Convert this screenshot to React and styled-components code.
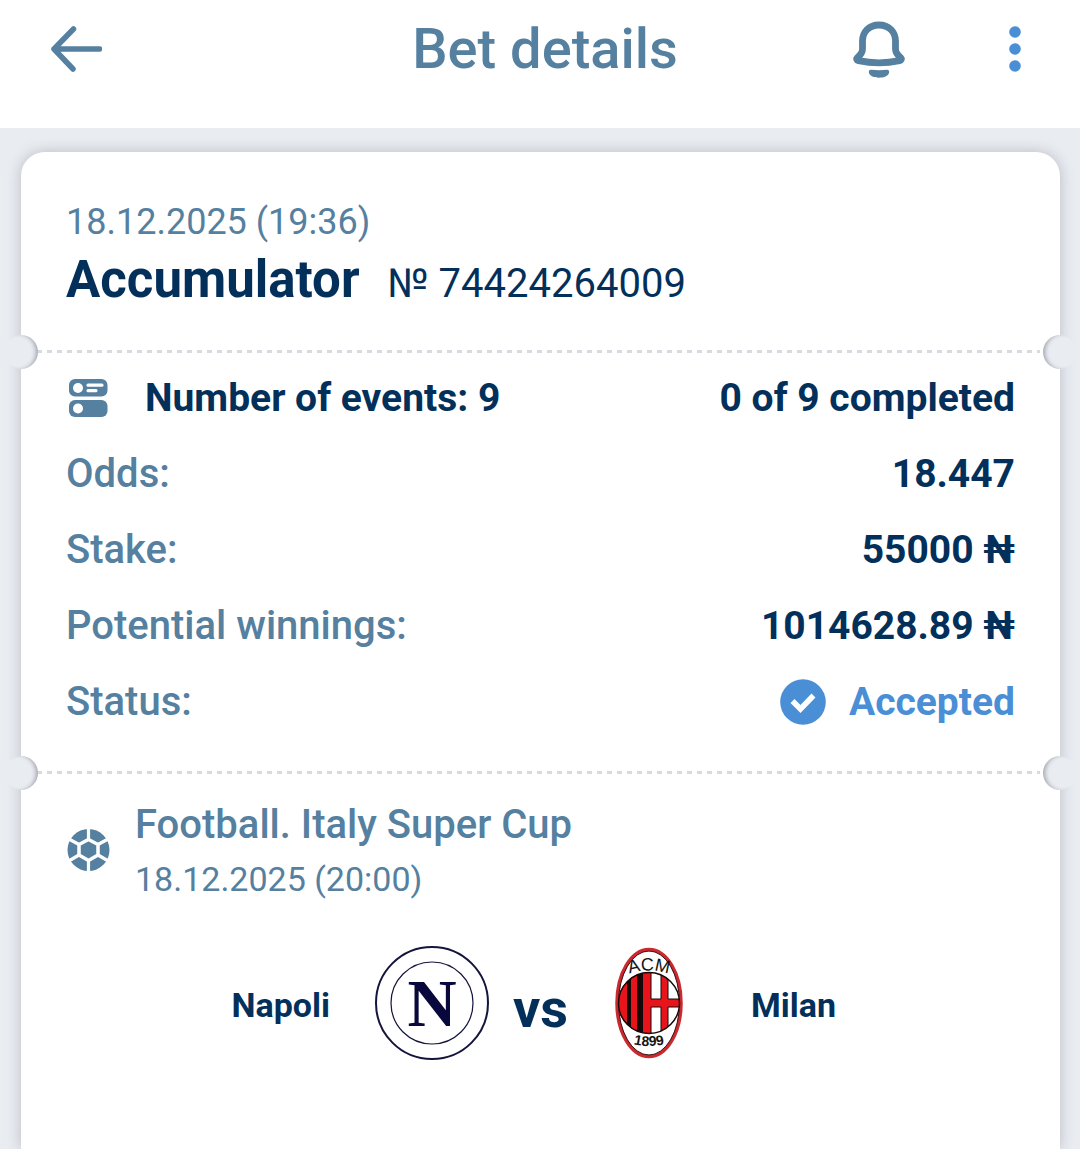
import React from "react";
import styled, { createGlobalStyle } from "styled-components";

const GlobalStyle = createGlobalStyle`
  * {
    box-sizing: border-box;
  }

  body {
    margin: 0;
    background-color: #e9edf2;
    color: #03305a;
    font-family: Roboto, "Noto Sans", sans-serif;
  }
`;

const Page = styled.div`
  display: flex;
  flex-direction: column;
  min-height: 100vh;
  overflow: hidden;
`;

const Header = styled.header`
  display: grid;
  grid-template-columns: 1fr auto 1fr;
  align-items: center;
  height: 128px;
  padding: 0 40px 30px 50px;
  background-color: #fff;
`;

const Title = styled.h1`
  margin: 0;
  font-size: 56px;
  font-weight: 500;
  line-height: 64px;
  color: #5580a0;
`;

const HeaderActions = styled.div`
  display: flex;
  align-items: center;
  justify-content: flex-end;
  gap: 84px;
`;

const IconButton = styled.button`
  display: flex;
  align-items: center;
  justify-content: center;
  justify-self: start;
  width: ${(props) => props.$width};
  height: 64px;
  padding: 0;
  border: none;
  background: none;
  color: ${(props) => props.$color || "#5580a0"};
  cursor: pointer;
`;

const Ticket = styled.main`
  flex: 1;
  margin: 24px 20px 0 21px;
  background-color: #fff;
  border-radius: 24px 24px 0 0;
  box-shadow: 0 0 14px rgba(60, 60, 75, 0.28);
`;

const Summary = styled.section`
  padding: 48px 45px 32px;
`;

const DateText = styled.p`
  margin: 0;
  font-size: ${(props) => props.$size || "36px"};
  line-height: 44px;
  color: #5580a0;
`;

const BetTitle = styled.h2`
  display: flex;
  align-items: baseline;
  gap: 28px;
  margin: 8px 0 0;
  font-size: 51px;
  font-weight: 700;
  line-height: 56px;
`;

const BetNumber = styled.span`
  font-size: 40px;
  font-weight: 400;
`;

/* Perforated line with a punched hole on each edge of the ticket */
const Perforation = styled.div`
  position: relative;
  height: 16px;

  &::before {
    content: "";
    position: absolute;
    top: 6px;
    left: 16px;
    right: 20px;
    height: 3px;
    background: repeating-linear-gradient(
      to right,
      #d9dae1 0 5px,
      transparent 5px 10px
    );
  }
`;

const Notch = styled.span`
  position: absolute;
  top: -9px;
  ${(props) => props.$side}: -17px;
  width: 34px;
  height: 34px;
  border-radius: 50%;
  background-color: #e9edf2;
  box-shadow: inset ${(props) => (props.$side === "left" ? "-4px" : "4px")} 0
    4px -2px rgba(60, 60, 75, 0.4);
`;

const Details = styled.dl`
  margin: 0;
  padding: 0 45px 25px;
`;

const DetailRow = styled.div`
  display: flex;
  align-items: center;
  justify-content: space-between;
  height: 76px;
`;

const DetailLabel = styled.dt`
  display: flex;
  align-items: center;
  gap: 37px;
  font-size: ${(props) => (props.$strong ? "39px" : "40px")};
  font-weight: ${(props) => (props.$strong ? 700 : 500)};
  line-height: 48px;
  color: ${(props) => (props.$strong ? "#03305a" : "#5580a0")};
`;

const DetailValue = styled.dd`
  display: flex;
  align-items: center;
  gap: 23px;
  margin: 0;
  font-size: 39px;
  font-weight: 700;
  line-height: 48px;
  color: ${(props) => (props.$accepted ? "#4a8fd6" : "#03305a")};
`;

const Event = styled.section`
  padding: 18px 45px 48px;
`;

const EventHeader = styled.div`
  display: flex;
  align-items: center;
  gap: 24px;
`;

const EventInfo = styled.div`
  display: flex;
  flex-direction: column;
  gap: 6px;
`;

const League = styled.h3`
  margin: 0;
  font-size: 40px;
  font-weight: 500;
  line-height: 52px;
  color: #5580a0;
`;

const Match = styled.div`
  display: grid;
  grid-template-columns: 1fr auto auto auto 1fr;
  align-items: center;
  margin-top: 45px;
`;

const Team = styled.span`
  padding: 4px 45px 0;
  font-size: 34px;
  font-weight: 700;
  line-height: 40px;
  text-align: ${(props) => props.$align};
`;

const Versus = styled.span`
  padding: 12px 24px 0;
  font-size: 54px;
  font-weight: 700;
  line-height: 56px;
`;

const ArrowIcon = () => (
  <svg width="52" height="46" viewBox="0 0 52 46" fill="none" stroke="currentColor" strokeWidth="5.500" strokeLinecap="round" strokeLinejoin="round" aria-hidden="true">
    <path d="M23.500 3L4 23l19 20M4 23h45.500" />
  </svg>
);

const BellIcon = () => (
  <svg width="54" height="58" viewBox="0 0 54 58" aria-hidden="true">
    <path
      d="M27 5C17 5 10.500 12 10.500 21v8c0 4-2 6-5 8.500-1.500 1.500-1 2.700 1 3.200 13 2.700 28 2.700 41 0 2-.5 2.500-1.700 1-3.200-3-2.500-5-4.500-5-8.500v-8C43.500 12 37 5 27 5z"
      fill="none"
      stroke="currentColor"
      strokeWidth="6.800"
      strokeLinejoin="round"
    />
    <path d="M19 49.700c5 .6 11 .6 16 0 2 0 2.500 1.500 2 3.300-.8 3-5 4.700-10 4.700s-9.200-1.700-10-4.700c-.5-1.800 0-3.300 2-3.300z" fill="currentColor" />
  </svg>
);

const MoreIcon = () => (
  <svg width="12" height="46" viewBox="0 0 12 46" fill="currentColor" aria-hidden="true">
    <circle cx="6" cy="6" r="5.800" />
    <circle cx="6" cy="23" r="5.800" />
    <circle cx="6" cy="40" r="5.800" />
  </svg>
);

const EventsIcon = () => (
  <svg width="42" height="40" viewBox="0 0 42 40" aria-hidden="true">
    <rect x="3" y="1" width="38.500" height="17.500" rx="6" fill="#5580a0" />
    <rect x="3" y="22" width="38.500" height="17" rx="6" fill="#5580a0" />
    <g fill="#fff">
      <circle cx="12" cy="10" r="5" />
      <circle cx="12" cy="30.500" r="5" />
      <rect x="20.500" y="5.500" width="17" height="3.200" rx="1.500" />
      <rect x="20.500" y="11" width="11" height="3.200" rx="1.500" />
    </g>
  </svg>
);

const CheckIcon = () => (
  <svg width="46" height="46" viewBox="0 0 46 46" aria-hidden="true">
    <circle cx="23" cy="23" r="22.800" fill="#4a8fd6" />
    <path d="M12.500 22l8 8L33.500 16.500" fill="none" stroke="#fff" strokeWidth="5.500" />
  </svg>
);

const BallIcon = () => (
  <svg width="45" height="44" viewBox="0 0 45 44" aria-hidden="true">
    <circle cx="22.500" cy="22" r="21" fill="#5580a0" />
    <path
      d="M22.500 11.500L32 16.500V27l-9.500 5.500L13 27V16.500z"
      fill="none"
      stroke="#fff"
      strokeWidth="3.500"
    />
    <path
      d="M22.500 0v12M22.500 32v12M32 16.500l12-6.500M32 27l12 7M13 16.500L1 10M13 27L1 34"
      fill="none"
      stroke="#fff"
      strokeWidth="3.200"
    />
  </svg>
);

const NapoliLogo = () => (
  <svg width="114" height="114" viewBox="0 0 114 114" role="img" aria-label="Napoli">
    <g fill="#fff" stroke="#14143c">
      <circle cx="57" cy="57" r="56" strokeWidth="2" />
      <circle cx="57" cy="57" r="41" strokeWidth="1.200" />
    </g>
    <text x="57" y="80" textAnchor="middle" fontFamily="Liberation Serif, serif" fontSize="68" fontWeight="700" fill="#08083c">
      N
    </text>
  </svg>
);

const MilanLogo = () => (
  <svg width="114" height="114" viewBox="0 0 114 114" role="img" aria-label="Milan">
    <defs>
      <clipPath id="milan-shield">
        <ellipse cx="57" cy="57" rx="31" ry="30.500" />
      </clipPath>
      <path id="milan-top" d="M32 30Q57 19 82 30" />
      <path id="milan-bottom" d="M34 96Q57 104 80 96" />
    </defs>
    <ellipse cx="57" cy="57" rx="32" ry="53.500" fill="#fff" stroke="#c9292f" strokeWidth="3.500" />
    <ellipse cx="57" cy="57" rx="30.500" ry="52" fill="none" stroke="#3d1518" strokeWidth="1" />
    <g clipPath="url(#milan-shield)">
      <rect x="25" y="26" width="64" height="62" fill="#fff" />
      <rect x="25" y="26" width="34" height="62" fill="#150808" />
      <g fill="#e8141c">
        <rect x="25" y="26" width="10" height="62" />
        <rect x="39" y="26" width="6" height="62" />
        <rect x="51" y="26" width="8" height="62" />
        <rect x="69" y="26" width="7" height="62" />
        <rect x="59" y="53" width="30" height="8" />
      </g>
      <path d="M59 26v27h10V26M59 88V61h10v27M76 26v27h13M76 88V61h13" fill="none" stroke="#180808" strokeWidth="1" />
    </g>
    <ellipse cx="57" cy="57" rx="30.500" ry="30.500" fill="none" stroke="#180808" strokeWidth="1.500" />
    <g fontFamily="Liberation Sans, sans-serif" fill="#151515" textAnchor="middle">
      <text fontSize="18">
        <textPath href="#milan-top" startOffset="50%">ACM</textPath>
      </text>
      <text fontSize="14" fontWeight="700">
        <textPath href="#milan-bottom" startOffset="50%">1899</textPath>
      </text>
    </g>
  </svg>
);

const TicketDivider = () => (
  <Perforation>
    <Notch $side="left" />
    <Notch $side="right" />
  </Perforation>
);

const details = [
  { label: "Odds:", value: "18.447" },
  { label: "Stake:", value: "55000 ₦" },
  { label: "Potential winnings:", value: "1014628.89 ₦" },
];

const App = () => {
  return (
    <Page>
      <GlobalStyle />
      <Header>
        <IconButton type="button" aria-label="Back" $width="52px">
          <ArrowIcon />
        </IconButton>
        <Title>Bet details</Title>
        <HeaderActions>
          <IconButton type="button" aria-label="Notifications" $width="54px">
            <BellIcon />
          </IconButton>
          <IconButton type="button" aria-label="More" $width="50px" $color="#4a8fd6">
            <MoreIcon />
          </IconButton>
        </HeaderActions>
      </Header>
      <Ticket>
        <Summary>
          <DateText>18.12.2025 (19:36)</DateText>
          <BetTitle>
            Accumulator <BetNumber>№ 74424264009</BetNumber>
          </BetTitle>
        </Summary>
        <TicketDivider />
        <Details>
          <DetailRow>
            <DetailLabel $strong>
              <EventsIcon />
              Number of events: 9
            </DetailLabel>
            <DetailValue>0 of 9 completed</DetailValue>
          </DetailRow>
          {details.map((item) => (
            <DetailRow key={item.label}>
              <DetailLabel>{item.label}</DetailLabel>
              <DetailValue>{item.value}</DetailValue>
            </DetailRow>
          ))}
          <DetailRow>
            <DetailLabel>Status:</DetailLabel>
            <DetailValue $accepted>
              <CheckIcon />
              Accepted
            </DetailValue>
          </DetailRow>
        </Details>
        <TicketDivider />
        <Event>
          <EventHeader>
            <BallIcon />
            <EventInfo>
              <League>Football. Italy Super Cup</League>
              <DateText $size="34px">18.12.2025 (20:00)</DateText>
            </EventInfo>
          </EventHeader>
          <Match>
            <Team $align="right">Napoli</Team>
            <NapoliLogo />
            <Versus>vs</Versus>
            <MilanLogo />
            <Team $align="left">Milan</Team>
          </Match>
        </Event>
      </Ticket>
    </Page>
  );
};

export default App;
